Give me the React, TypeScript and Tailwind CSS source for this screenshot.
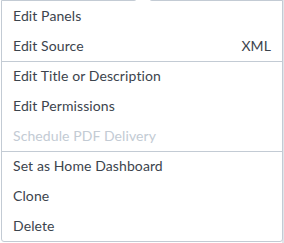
import React from 'react';

type Item = { label: string; right?: string; disabled?: boolean };

const groups: Item[][] = [
  [{ label: 'Edit Panels' }, { label: 'Edit Source', right: 'XML' }],
  [{ label: 'Edit Title or Description' }, { label: 'Edit Permissions' }, { label: 'Schedule PDF Delivery', disabled: true }],
  [{ label: 'Set as Home Dashboard' }, { label: 'Clone' }, { label: 'Delete' }],
];

export default function App() {
  return (
    <div className="w-[284px] h-[243px] bg-white overflow-hidden relative" style={{ fontFamily: 'Lato, "Open Sans", sans-serif' }}>
      <div className="absolute right-0 top-0 bottom-0 w-[2px] bg-[#e1e6eb]" />
      <div className="relative ml-[1px] w-[282px] h-[242px] border border-[#c3cbd4] rounded-b-[3px] bg-white">
        {/* caret */}
        <div className="absolute -top-[7px] left-[135px] w-[12px] h-[12px] rotate-45 bg-white border-l border-t border-[#c3cbd4]" />
        <div className="relative">
          {groups.map((g, gi) => (
            <div key={gi}>
              {g.map((it, ii) => (
                <div
                  key={it.label}
                  className={`flex items-center justify-between h-[30px] pl-[11px] pr-[11px] pb-[2px] text-[14px] tracking-[0.1px] ${
                    gi > 0 && ii === 0 ? 'border-t border-[#c3cbd4]' : ''
                  } ${it.disabled ? 'text-[#c3cbd4]' : 'text-[#3c444d]'}`}
                >
                  <span>{it.label}</span>
                  {it.right && <span>{it.right}</span>}
                </div>
              ))}
            </div>
          ))}
        </div>
      </div>
    </div>
  );
}
